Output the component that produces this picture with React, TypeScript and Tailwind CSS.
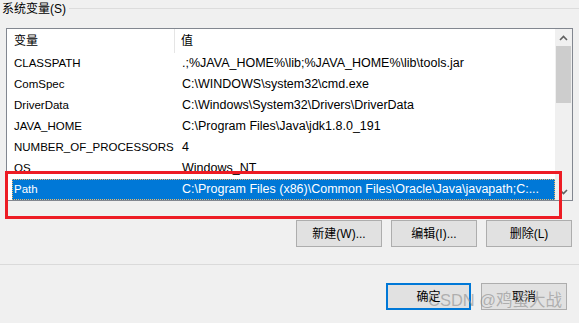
const rows = [
  { name: 'CLASSPATH', value: '.;%JAVA_HOME%\\lib;%JAVA_HOME%\\lib\\tools.jar' },
  { name: 'ComSpec', value: 'C:\\WINDOWS\\system32\\cmd.exe' },
  { name: 'DriverData', value: 'C:\\Windows\\System32\\Drivers\\DriverData' },
  { name: 'JAVA_HOME', value: 'C:\\Program Files\\Java\\jdk1.8.0_191' },
  { name: 'NUMBER_OF_PROCESSORS', value: '4' },
  { name: 'OS', value: 'Windows_NT' },
  { name: 'Path', value: 'C:\\Program Files (x86)\\Common Files\\Oracle\\Java\\javapath;C:...', selected: true },
];

function WinButton({ label, primary }: { label: string; primary?: boolean }) {
  return (
    <button
      className={
        primary
          ? 'h-[27px] w-[85px] bg-[#e1e1e1] border-2 border-[#0078d7] text-[12px] text-black'
          : 'h-[27px] w-[86px] bg-[#e1e1e1] border border-[#adadad] text-[12px] text-black'
      }
    >
      {label}
    </button>
  );
}

function Chevron({ up }: { up?: boolean }) {
  return (
    <svg width="9" height="6" viewBox="0 0 9 6" className="text-[#606060]">
      <polyline
        points={up ? '1,5 4.5,1.5 8,5' : '1,1 4.5,4.5 8,1'}
        fill="none"
        stroke="currentColor"
        strokeWidth="1.6"
      />
    </svg>
  );
}

export default function App() {
  return (
    <div className="relative w-[579px] h-[323px] overflow-hidden bg-[#f0f0f0] text-[11.5px] text-black font-['Liberation_Sans','Noto_Sans_CJK_SC',sans-serif]">
      {/* group title */}
      <div className="flex items-center h-[17px]">
        <span className="pl-[2px] pr-[3px] text-[12px]">系统变量(S)</span>
        <div className="flex-1 h-px bg-[#dcdcdc] -mt-[1px]" />
      </div>

      {/* list view */}
      <div className="ml-[6px] mt-[11px] w-[567px] h-[173px] border border-[#828790] bg-white flex">
        <div className="flex-1 flex flex-col">
          <div className="flex h-[24px] items-center text-[12px]">
            <div className="w-[168px] h-full flex items-center pl-[7px] border-r border-[#e5e5e5]">变量</div>
            <div className="pl-[6px]">值</div>
          </div>
          {rows.map((r) => (
            <div
              key={r.name}
              className={
                r.selected
                  ? 'flex h-[21px] items-center ml-[5px] bg-[#0078d7] text-white outline outline-1 outline-dotted outline-[#f2b866] -outline-offset-1'
                  : 'flex h-[21px] items-center ml-[5px]'
              }
            >
              <div className="w-[163px] pl-[2px] whitespace-nowrap">{r.name}</div>
              <div className="flex-1 pl-[7px] text-[12.5px] whitespace-nowrap overflow-hidden">{r.value}</div>
            </div>
          ))}
        </div>
        {/* scrollbar */}
        <div className="w-[17px] bg-[#f0f0f0] flex flex-col">
          <div className="h-[17px] flex items-center justify-center">
            <Chevron up />
          </div>
          <div className="ml-[1px] w-[15px] h-[57px] bg-[#cdcdcd]" />
          <div className="flex-1" />
          <div className="h-[17px] flex items-center justify-center">
            <Chevron />
          </div>
        </div>
      </div>

      {/* list buttons */}
      <div className="flex justify-end gap-[9px] pr-[7px] mt-[19px]">
        <WinButton label="新建(W)..." />
        <WinButton label="编辑(I)..." />
        <WinButton label="删除(L)" />
      </div>

      <div className="mt-[17px] h-px bg-[#dadada]" />

      {/* dialog buttons */}
      <div className="flex justify-end gap-[10px] pr-[12px] mt-[18px]">
        <WinButton label="确定" primary />
        <WinButton label="取消" />
      </div>

      {/* red highlight annotation */}
      <div className="absolute left-[5px] top-[171px] w-[557px] h-[48px] border-[3px] border-[#ed1c24]" />

      {/* watermark */}
      <div className="absolute left-[428px] top-[292px] text-[16.5px] leading-none whitespace-nowrap text-[#8c8c8c]/60">
        CSDN @鸡蛋大战
      </div>
    </div>
  );
}
